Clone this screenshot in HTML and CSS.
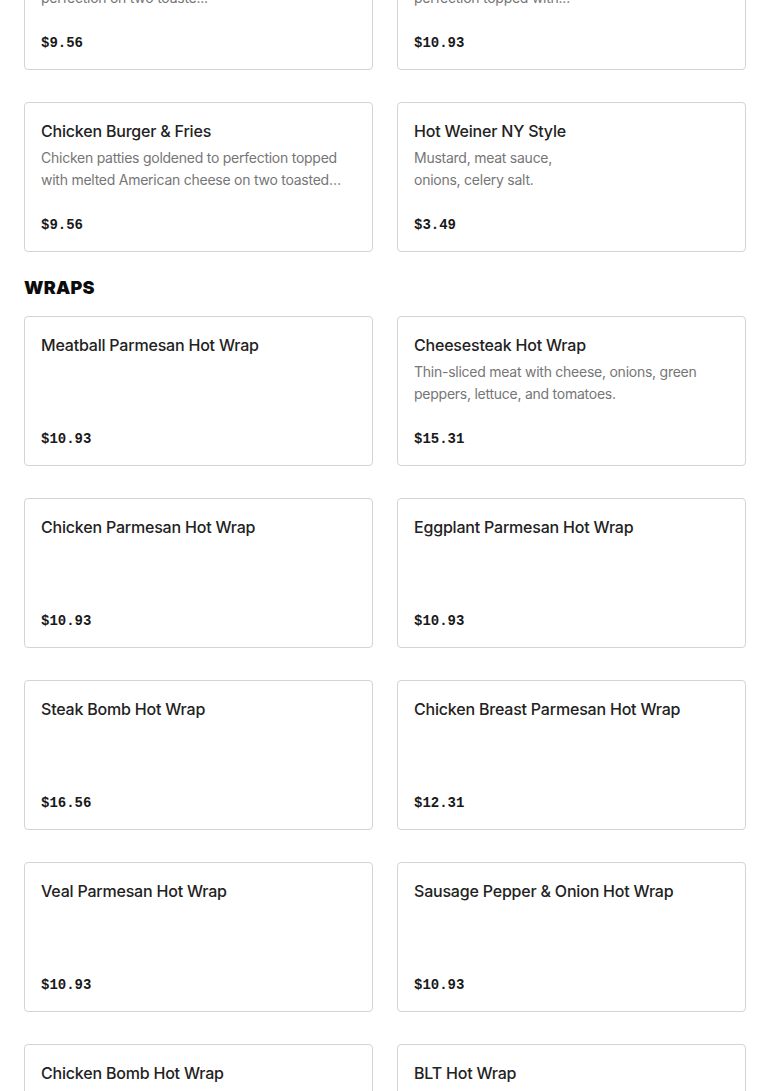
FILE: index.html
```html
<!DOCTYPE html>
<html lang="en">
<head>
<meta charset="utf-8">
<title>Menu</title>
<link rel="stylesheet" href="styles.css">
</head>
<body>
<main class="menu">
  <section class="section section-first">
    <div class="grid">
      <article class="card">
        <h3 class="card-title">Cheeseburger &amp; Fries</h3>
        <p class="card-desc">Beef patties with melted cheese, grilled to<br>perfection on two toaste...</p>
        <p class="card-price">$9.56</p>
      </article>
      <article class="card">
        <h3 class="card-title">Bacon Cheeseburger &amp; Fries</h3>
        <p class="card-desc">Beef patties with crispy bacon goldened to<br>perfection topped with...</p>
        <p class="card-price">$10.93</p>
      </article>
      <article class="card">
        <h3 class="card-title">Chicken Burger &amp; Fries</h3>
        <p class="card-desc">Chicken patties goldened to perfection topped with melted American cheese on two toasted buns with lettuce.</p>
        <p class="card-price">$9.56</p>
      </article>
      <article class="card">
        <h3 class="card-title">Hot Weiner NY Style</h3>
        <p class="card-desc">Mustard, meat sauce,<br>onions, celery salt.</p>
        <p class="card-price">$3.49</p>
      </article>
    </div>
  </section>

  <section class="section">
    <h2 class="section-title">WRAPS</h2>
    <div class="grid">
      <article class="card">
        <h3 class="card-title">Meatball Parmesan Hot Wrap</h3>
        <p class="card-price">$10.93</p>
      </article>
      <article class="card">
        <h3 class="card-title">Cheesesteak Hot Wrap</h3>
        <p class="card-desc">Thin-sliced meat with cheese, onions, green peppers, lettuce, and tomatoes.</p>
        <p class="card-price">$15.31</p>
      </article>
      <article class="card">
        <h3 class="card-title">Chicken Parmesan Hot Wrap</h3>
        <p class="card-price">$10.93</p>
      </article>
      <article class="card">
        <h3 class="card-title">Eggplant Parmesan Hot Wrap</h3>
        <p class="card-price">$10.93</p>
      </article>
      <article class="card">
        <h3 class="card-title">Steak Bomb Hot Wrap</h3>
        <p class="card-price">$16.56</p>
      </article>
      <article class="card">
        <h3 class="card-title">Chicken Breast Parmesan Hot Wrap</h3>
        <p class="card-price">$12.31</p>
      </article>
      <article class="card">
        <h3 class="card-title">Veal Parmesan Hot Wrap</h3>
        <p class="card-price">$10.93</p>
      </article>
      <article class="card">
        <h3 class="card-title">Sausage Pepper &amp; Onion Hot Wrap</h3>
        <p class="card-price">$10.93</p>
      </article>
      <article class="card">
        <h3 class="card-title">Chicken Bomb Hot Wrap</h3>
        <p class="card-price">$12.31</p>
      </article>
      <article class="card">
        <h3 class="card-title">BLT Hot Wrap</h3>
        <p class="card-desc">Bacon, lettuce, and tomatoes with mayo.</p>
        <p class="card-price">$9.56</p>
      </article>
    </div>
  </section>
</main>
</body>
</html>
```
FILE: styles.css
```css
* { box-sizing: border-box; }
html, body { margin: 0; padding: 0; background: #fff; }
body {
  font-family: "Inter", "Liberation Sans", sans-serif;
  color: #191919;
  overflow: hidden;
}
.menu {
  padding: 0 24px;
}
.section-first {
  margin-top: -80px;
}
.section {
  display: flex;
  flex-direction: column;
}
.section-title {
  margin: 24px 0 16px;
  font-size: 18px;
  line-height: 24px;
  font-weight: 900;
  letter-spacing: 0.2px;
  color: #0c0c0c;
}
.grid {
  display: grid;
  grid-template-columns: 1fr 1fr;
  column-gap: 24px;
  row-gap: 32px;
}
.card {
  height: 150px;
  border: 1px solid #d4d4d4;
  border-radius: 4px;
  padding: 16px;
  display: flex;
  flex-direction: column;
}
.card-title {
  margin: 0;
  font-size: 16px;
  line-height: 24px;
  font-weight: 500;
  letter-spacing: -0.2px;
  color: #222;
}
.card-desc {
  margin: 4px 0 0;
  font-size: 14px;
  line-height: 22px;
  letter-spacing: -0.25px;
  color: #767676;
  display: -webkit-box;
  -webkit-line-clamp: 2;
  -webkit-box-orient: vertical;
  overflow: hidden;
}
.card-price {
  margin: auto 0 0;
  font-family: "Liberation Mono", "DejaVu Sans Mono", monospace;
  font-size: 14px;
  line-height: 20px;
  font-weight: 700;
  color: #191919;
}
```
